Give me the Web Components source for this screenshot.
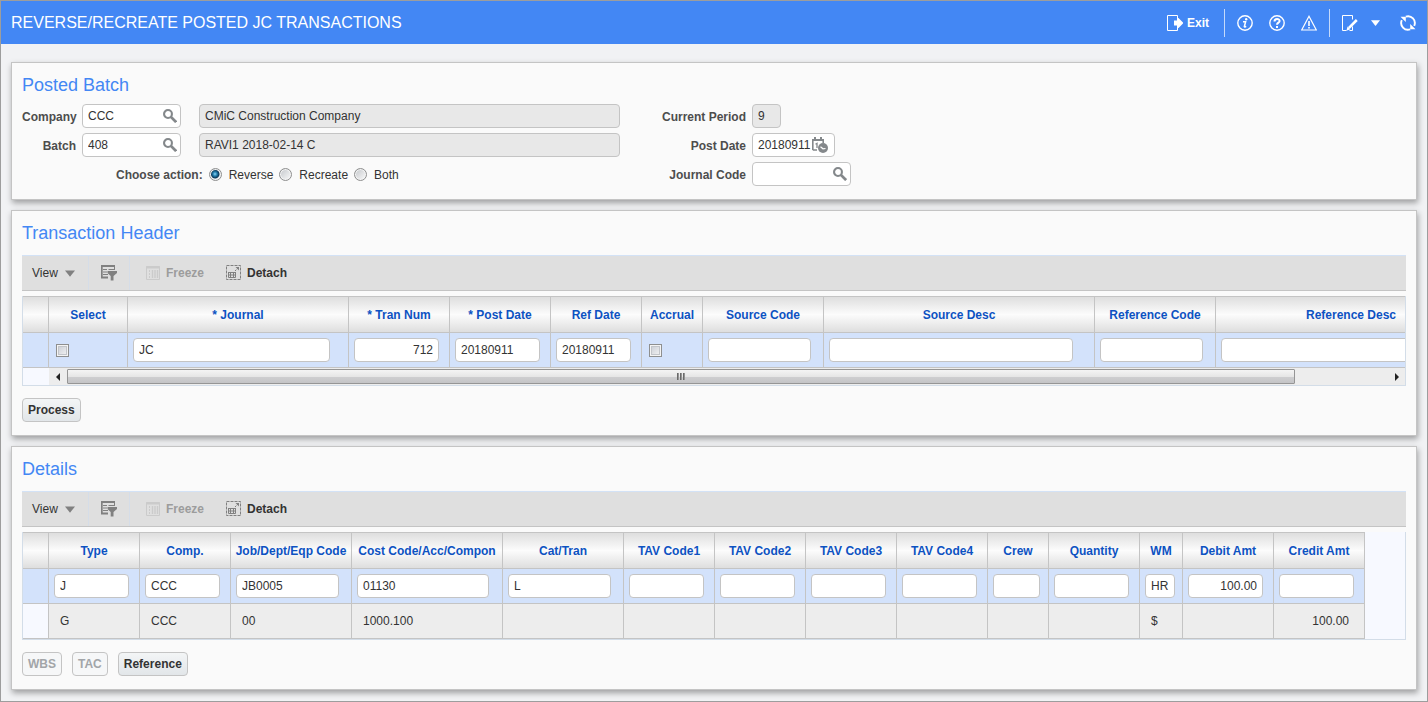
<!DOCTYPE html>
<html lang="en">
<head>
<meta charset="utf-8">
<title>Reverse/Recreate Posted JC Transactions</title>
<style>
    body {
        margin: 0;
        font: 12px/16px "Liberation Sans", Arial, sans-serif;
        color: #333;
    }

    .row {
        display: flex;
        gap: 18px;
    }

    .form {
        display: flex;
        gap: 42px;
    }

    .group {
        display: flex;
        flex-direction: column;
        gap: 5px;
    }

    .group.left {
        --label-width: 54px;
    }

    .group.right {
        --label-width: 84px;
    }

    .actions {
        display: flex;
        gap: 10px;
        margin-top: 12px;
    }
</style>
</head>
<body>
<jc-page>
    <jc-header slot="header" title="REVERSE/RECREATE POSTED JC TRANSACTIONS"></jc-header>

    <jc-panel heading="Posted Batch" dense>
        <div class="form">
            <div class="group left">
                <div class="row">
                    <jc-field label="Company" value="CCC" size="99" icon="search"></jc-field>
                    <jc-field hint="Company name" value="CMiC Construction Company" size="421" readonly></jc-field>
                </div>
                <div class="row">
                    <jc-field label="Batch" value="408" size="99" icon="search"></jc-field>
                    <jc-field hint="Batch name" value="RAVI1 2018-02-14 C" size="421" readonly></jc-field>
                </div>
                <jc-choice label="Choose action:" options="Reverse,Recreate,Both" selected="Reverse"></jc-choice>
            </div>
            <div class="group right">
                <jc-field label="Current Period" value="9" size="29" readonly></jc-field>
                <jc-field label="Post Date" value="20180911" size="83" icon="calendar"></jc-field>
                <jc-field label="Journal Code" value="" size="99" icon="search"></jc-field>
            </div>
        </div>
    </jc-panel>

    <jc-panel heading="Transaction Header">
        <jc-toolbar></jc-toolbar>
        <jc-grid id="header-grid" scroll></jc-grid>
        <div class="actions">
            <jc-button>Process</jc-button>
        </div>
    </jc-panel>

    <jc-panel heading="Details">
        <jc-toolbar></jc-toolbar>
        <jc-grid id="detail-grid"></jc-grid>
        <div class="actions">
            <jc-button disabled>WBS</jc-button>
            <jc-button disabled>TAC</jc-button>
            <jc-button>Reference</jc-button>
        </div>
    </jc-panel>
</jc-page>

<script>
const ICONS = {
    exit: `<path d="M10.500 4V.5H.5v15h10V12" fill="none" stroke="currentColor"/><path d="M7 5.500h3V3h1.500L16 7.500v1L11.500 13H10v-2.500H7z" fill="currentColor"/>`,
    info: `<circle cx="8" cy="8" r="7.200" fill="none" stroke="currentColor" stroke-width="1.400"/><circle cx="9.200" cy="4.200" r="1.200" fill="currentColor"/><path d="M6 6.800h2.600L7.300 11.700q.3.600 1.900-.4" fill="none" stroke="currentColor" stroke-width="1.500"/>`,
    help: `<circle cx="8" cy="8" r="7.200" fill="none" stroke="currentColor" stroke-width="1.400"/><path d="M5.500 6.400C5.500 3.200 10.600 3.300 10.600 6c0 1.800-2.600 1.600-2.600 3.800" fill="none" stroke="currentColor" stroke-width="2"/><path d="M7 11h2v2H7z" fill="currentColor"/>`,
    warning: `<path d="M8 1.300L15.300 15H.7z" fill="none" stroke="currentColor" stroke-width="1.200"/><path d="M7.200 6h1.600v5H7.200zM7.200 12h1.600v1.600H7.200z" fill="currentColor"/>`,
    edit: `<path d="M10.500 4.500v-4H.5v15h4M10.500 11.500v4H7.500" fill="none" stroke="currentColor"/><path d="M14.800 5L7 12.800" fill="none" stroke="currentColor" stroke-width="2.600"/><path d="M5.600 11.400l2.800 2.800-4 1.500z" fill="currentColor"/>`,
    refresh: `<path d="M5.800 1.600A6.800 6.800 0 0 1 14.200 10.800M10.200 14.400A6.800 6.800 0 0 1 1.800 5.200" fill="none" stroke="currentColor" stroke-width="1.900"/><path d="M.5 1.800H5.800V7zM15.500 14.200H10.200V9z" fill="currentColor"/>`,
    caret: `<path d="M0 4h16L8 14z" fill="currentColor"/>`,
    search: `<circle cx="5.700" cy="5.700" r="4.500" fill="none" stroke="currentColor" stroke-width="2.400"/><path d="M9 9l6 6" stroke="currentColor" stroke-width="3.200"/>`,
    calendar: `<path d="M.8 13V2.800h10.400V6M.8 13H5" fill="none" stroke="currentColor" stroke-width="1.600"/><path d="M2 0h2v4H2zM8 0h2v4H8zM0 2h12v2H0z" fill="currentColor"/><path d="M3.500 7.200L5 6.300V11" fill="none" stroke="currentColor" stroke-width="1.300"/><circle cx="11" cy="11" r="5" fill="currentColor"/><path d="M8.500 9.800l2.500 2 2.500-.3" fill="none" stroke="#fff" stroke-width="1.200"/>`,
    filter: `<path d="M0 1h14M.7 1v12M0 12.500h7" fill="none" stroke="currentColor" stroke-width="2"/><path d="M2 4.500h4M7.500 4.500H14M2 7h4M2 9.500h5M13.500 1v4" stroke="currentColor"/><path d="M6.500 6H16v2l-3.500 3v4.500h-2.800V11L6.500 8z" fill="currentColor"/>`,
    freeze: `<path d="M1.500 1.500h13v13h-13z" fill="none" stroke="currentColor"/><path d="M1 2.500h14" stroke="currentColor" stroke-width="2"/><path d="M4.500 5v8" stroke="currentColor" stroke-dasharray="2 1"/><path d="M7.500 5v8M10 5v8M12.500 5v8" stroke="currentColor" stroke-width="1.400"/>`,
    detach: `<path d="M.5.5h14v14H.5z" fill="none" stroke="currentColor" stroke-dasharray="3 1"/><path d="M2.500 7.500h7v5h-7zM2.500 10h7M4.500 8v4.500M7.500 8v4.500M2 7.500h8" fill="none" stroke="currentColor"/><path d="M9 6l3.500-3.500" stroke="currentColor" stroke-dasharray="2 1"/><path d="M9.500 2H13v3.500z" fill="currentColor"/>`
};

class JcIcon extends HTMLElement {
    constructor() {
        super();
        this.attachShadow({mode: 'open'});
    }

    connectedCallback() {
        this.shadowRoot.innerHTML = `
            <style>
                :host {
                    display: block;
                    flex: none;
                    width: 16px;
                    height: 16px;
                }

                svg {
                    display: block;
                    width: 100%;
                    height: 100%;
                }
            </style>
            <svg viewBox="0 0 16 16" aria-hidden="true">${ICONS[this.getAttribute('name')]}</svg>
        `;
    }
}

class JcPage extends HTMLElement {
    constructor() {
        super();
        this.attachShadow({mode: 'open'});
        this.shadowRoot.innerHTML = `
            <style>
                :host {
                    display: block;
                    box-sizing: border-box;
                    min-height: 100vh;
                    border: 1px solid #9d9d9d;
                    background: #f1f2f4;
                }

                main {
                    display: flex;
                    flex-direction: column;
                    gap: 10px;
                    padding: 18px 10px 10px;
                }
            </style>
            <slot name="header"></slot>
            <main><slot></slot></main>
        `;
    }
}

class JcHeader extends HTMLElement {
    constructor() {
        super();
        this.attachShadow({mode: 'open'});
    }

    connectedCallback() {
        this.shadowRoot.innerHTML = `
            <style>
                :host {
                    display: block;
                }

                header {
                    display: flex;
                    align-items: center;
                    justify-content: space-between;
                    height: 43px;
                    padding: 0 11px 0 10px;
                    background: #4387f4;
                    color: #fff;
                }

                h1 {
                    margin: 0;
                    font-size: 16px;
                    font-weight: normal;
                    line-height: 20px;
                }

                nav, .icons {
                    display: flex;
                    align-items: center;
                }

                .icons {
                    gap: 16px;
                    padding: 0 12px;
                    border-left: 1px solid #c5dafb;
                    height: 28px;
                }

                .icons.last {
                    gap: 13px;
                    padding-right: 0;
                }

                button {
                    display: flex;
                    align-items: center;
                    gap: 4px;
                    padding: 0;
                    border: 0;
                    background: none;
                    color: inherit;
                    font: inherit;
                }

                .exit {
                    margin-right: 15px;
                    font-weight: bold;
                }

                .refresh {
                    margin-left: 7px;
                }

                .small {
                    width: 9px;
                    height: 9px;
                }
            </style>
            <header>
                <h1>${this.getAttribute('title')}</h1>
                <nav>
                    <button class="exit"><jc-icon name="exit"></jc-icon>Exit</button>
                    <div class="icons">
                        <button aria-label="Information"><jc-icon name="info"></jc-icon></button>
                        <button aria-label="Help"><jc-icon name="help"></jc-icon></button>
                        <button aria-label="Warnings"><jc-icon name="warning"></jc-icon></button>
                    </div>
                    <div class="icons last">
                        <button aria-label="Edit"><jc-icon name="edit"></jc-icon></button>
                        <button aria-label="More"><jc-icon class="small" name="caret"></jc-icon></button>
                        <button class="refresh" aria-label="Refresh"><jc-icon name="refresh"></jc-icon></button>
                    </div>
                </nav>
            </header>
        `;
    }
}

class JcPanel extends HTMLElement {
    constructor() {
        super();
        this.attachShadow({mode: 'open'});
    }

    connectedCallback() {
        this.shadowRoot.innerHTML = `
            <style>
                :host {
                    display: block;
                    padding: 10px 10px 13px;
                    border: 1px solid #c4c4c4;
                    background: #fafafa;
                    box-shadow: 1px 3px 6px rgba(0, 0, 0, .35);
                }

                h2 {
                    margin: 0 0 10px;
                    font-size: 18px;
                    font-weight: normal;
                    line-height: 24px;
                    color: #4387f4;
                }

                :host([dense]) h2 {
                    margin-bottom: 7px;
                }
            </style>
            <h2>${this.getAttribute('heading')}</h2>
            <slot></slot>
        `;
    }
}

class JcField extends HTMLElement {
    constructor() {
        super();
        this.attachShadow({mode: 'open'});
    }

    connectedCallback() {
        const label = this.getAttribute('label');
        const icon = this.getAttribute('icon');
        const readonly = this.hasAttribute('readonly');
        this.shadowRoot.innerHTML = `
            <style>
                :host {
                    display: flex;
                    align-items: center;
                    gap: 6px;
                }

                label {
                    width: var(--label-width);
                    padding-top: 1px;
                    font-weight: bold;
                    text-align: right;
                    color: #4d4d4d;
                }

                .box {
                    display: flex;
                    align-items: center;
                    box-sizing: border-box;
                    width: ${this.getAttribute('size')}px;
                    height: 24px;
                    padding: 0 3px 0 5px;
                    border: 1px solid #c4c4c4;
                    border-radius: 4px;
                    background: #fff;
                }

                :host([readonly]) .box {
                    background: #e8e8e8;
                }

                input {
                    flex: 1;
                    min-width: 0;
                    padding: 0;
                    border: 0;
                    outline: 0;
                    background: none;
                    color: #333;
                    font: inherit;
                }

                button {
                    padding: 0;
                    border: 0;
                    background: none;
                    color: #84888b;
                }

                jc-icon {
                    width: 14px;
                    height: 14px;
                }

                jc-icon[name=calendar] {
                    width: 16px;
                    height: 16px;
                    margin-right: 3px;
                }
            </style>
            ${label ? `<label for="input">${label}</label>` : ''}
            <div class="box">
                <input id="input" value="${this.getAttribute('value')}" ${label ? '' : `aria-label="${this.getAttribute('hint')}"`} ${readonly ? 'readonly' : ''}>
                ${icon ? `<button aria-label="${icon}"><jc-icon name="${icon}"></jc-icon></button>` : ''}
            </div>
        `;
    }
}

class JcChoice extends HTMLElement {
    constructor() {
        super();
        this.attachShadow({mode: 'open'});
    }

    connectedCallback() {
        const selected = this.getAttribute('selected');
        const options = this.getAttribute('options').split(',');
        this.shadowRoot.innerHTML = `
            <style>
                :host {
                    display: block;
                    padding-left: 94px;
                }

                div {
                    display: flex;
                    align-items: center;
                    gap: 6px;
                    height: 24px;
                    padding-top: 1px;
                    box-sizing: border-box;
                }

                b {
                    color: #4d4d4d;
                }

                label {
                    display: flex;
                    align-items: center;
                    gap: 7px;
                }

                input {
                    appearance: none;
                    box-sizing: border-box;
                    width: 13px;
                    height: 13px;
                    margin: 0;
                    border: 1px solid #8e8f8f;
                    border-radius: 50%;
                    background: linear-gradient(135deg, #c3c6ca, #fbfbfb);
                    box-shadow: inset 0 0 0 1px #f4f4f4;
                }

                input:checked {
                    background: radial-gradient(circle at 5px 5px, #8fd6f5 0, #2280b0 2px, #0b3554 4px, #e6ebef 5px);
                }
            </style>
            <div role="radiogroup" aria-labelledby="caption">
                <b id="caption">${this.getAttribute('label')}</b>
                ${options.map(option => `
                    <label><input type="radio" name="action" ${option === selected ? 'checked' : ''}>${option}</label>
                `).join('')}
            </div>
        `;
    }
}

class JcToolbar extends HTMLElement {
    constructor() {
        super();
        this.attachShadow({mode: 'open'});
        this.shadowRoot.innerHTML = `
            <style>
                :host {
                    display: flex;
                    align-items: center;
                    box-sizing: border-box;
                    height: 36px;
                    padding-left: 10px;
                    border-top: 1px solid #d3e2f6;
                    border-bottom: 1px solid #c4c4c4;
                    background: #dfdfdf;
                }

                button {
                    display: flex;
                    align-items: center;
                    gap: 5px;
                    padding: 0;
                    border: 0;
                    background: none;
                    color: #333;
                    font: inherit;
                    font-weight: bold;
                }

                button.view {
                    gap: 7px;
                    width: 56px;
                    font-weight: normal;
                }

                button:disabled {
                    color: #9c9c9c;
                }

                button:disabled jc-icon {
                    color: #cbcbcb;
                }

                jc-icon {
                    color: #808080;
                }

                .view jc-icon {
                    width: 10px;
                    height: 10px;
                }

                .filter {
                    padding: 9px 12px;
                    border: solid #d5dde8;
                    border-width: 0 1px;
                }

                .freeze {
                    margin: 0 22px 0 15px;
                }
            </style>
            <button class="view">View<jc-icon name="caret"></jc-icon></button>
            <button class="filter" aria-label="Query by example"><jc-icon name="filter"></jc-icon></button>
            <button class="freeze" disabled><jc-icon name="freeze"></jc-icon>Freeze</button>
            <button><jc-icon name="detach"></jc-icon>Detach</button>
        `;
    }
}

class JcButton extends HTMLElement {
    constructor() {
        super();
        this.attachShadow({mode: 'open'});
        this.shadowRoot.innerHTML = `
            <style>
                :host {
                    display: block;
                }

                button {
                    height: 24px;
                    padding: 0 5px;
                    border: 1px solid #c4c4c4;
                    border-radius: 4px;
                    background: linear-gradient(#f3f5f6, #e2e6e9);
                    color: #333;
                    font: inherit;
                    font-weight: bold;
                }

                button:disabled {
                    background: #f6f7f8;
                    color: #a2a5a8;
                }
            </style>
            <button ${this.hasAttribute('disabled') ? 'disabled' : ''}><slot></slot></button>
        `;
    }
}

class JcGrid extends HTMLElement {
    constructor() {
        super();
        this.attachShadow({mode: 'open'});
    }

    // columns: [title, column width, input width, align], rows: arrays of values, the first row is being edited
    load(columns, rows) {
        const total = columns.reduce((sum, column) => sum + column[1], 26);
        this.shadowRoot.innerHTML = `
            <style>
                :host {
                    display: block;
                    margin-top: 5px;
                    border: solid #d3dde8;
                    border-width: 0 1px 1px;
                    background: #f7f9ff;
                }

                .view {
                    overflow: hidden;
                }

                table {
                    table-layout: fixed;
                    width: ${total}px;
                    border-spacing: 0;
                }

                th, td {
                    box-sizing: border-box;
                    padding: 0;
                    border: solid #c4c4c4;
                    border-width: 0 1px 1px 0;
                }

                th {
                    height: 37px;
                    border-top-width: 1px;
                    background: linear-gradient(#dedede, #fcfcfc 50%, #dedede);
                    color: #0d52c2;
                }

                td {
                    height: 35px;
                    padding: 0 15px 0 11px;
                    background: #ededed;
                }

                td.mark {
                    background: #f7f9ff;
                }

                .edit td {
                    padding: 0 0 0 5px;
                    background: #d3e2fb;
                }

                .right {
                    text-align: right;
                }

                .edit .right {
                    text-align: left;
                }

                input {
                    display: block;
                    box-sizing: border-box;
                    height: 24px;
                    margin: 0;
                    padding: 0 5px;
                    border: 1px solid #c4c4c4;
                    border-radius: 4px;
                    background: #fff;
                    color: #333;
                    font: inherit;
                }

                .right input {
                    text-align: right;
                }

                input[type=checkbox] {
                    appearance: none;
                    width: 13px;
                    height: 13px;
                    margin-left: 2px;
                    border: 1px solid #8e8f8f;
                    border-radius: 0;
                    background: linear-gradient(135deg, #c6cad2, #f6f6f6);
                    box-shadow: inset 0 0 0 1px #f4f4f4, inset 0 0 0 2px #c2c5ca;
                }

                .scroll {
                    display: flex;
                    height: 17px;
                    padding-left: 26px;
                }

                .scroll button {
                    display: flex;
                    align-items: center;
                    justify-content: center;
                    width: 17px;
                    padding: 0;
                    border: 0;
                    background: #ededed;
                }

                .scroll svg {
                    width: 4px;
                    height: 8px;
                }

                .track {
                    flex: 1;
                    padding: 1px;
                    background: #ededed;
                }

                .thumb {
                    display: flex;
                    align-items: center;
                    justify-content: center;
                    gap: 1px;
                    box-sizing: border-box;
                    width: 93%;
                    height: 15px;
                    border: 1px solid #959595;
                    border-radius: 1px;
                    background: linear-gradient(#f4f4f4, #e6e6e6 50%, #cfcfd1 50%, #c4c4c6);
                }

                .thumb i {
                    width: 2px;
                    height: 7px;
                    background: linear-gradient(90deg, #555, #aaa);
                }
            </style>
            <div class="view">
                <table>
                    <colgroup><col style="width: 26px">${columns.map(column => `<col style="width: ${column[1]}px">`).join('')}</colgroup>
                    <thead><tr><th></th>${columns.map(column => `<th scope="col">${column[0]}</th>`).join('')}</tr></thead>
                    <tbody>${rows.map((row, index) => `
                        <tr class="${index ? '' : 'edit'}"><td class="mark"></td>${row.map((value, i) => this.cell(value, columns[i], !index)).join('')}</tr>
                    `).join('')}</tbody>
                </table>
            </div>
            ${this.hasAttribute('scroll') ? `
                <div class="scroll">
                    <button aria-label="Scroll left"><svg viewBox="0 0 4 8"><path d="M4 0v8L0 4z" fill="#222"/></svg></button>
                    <div class="track"><div class="thumb"><i></i><i></i><i></i></div></div>
                    <button aria-label="Scroll right"><svg viewBox="0 0 4 8"><path d="M0 0v8l4-4z" fill="#222"/></svg></button>
                </div>
            ` : ''}
        `;
    }

    cell(value, [title, , size, align], edit) {
        if (!edit) {
            return `<td class="${align || ''}">${value}</td>`;
        }
        if (align === 'check') {
            return `<td><input type="checkbox" aria-label="${title}"></td>`;
        }
        return `<td class="${align || ''}"><input style="width: ${size}px" aria-label="${title}" value="${value}"></td>`;
    }
}

customElements.define('jc-icon', JcIcon);
customElements.define('jc-page', JcPage);
customElements.define('jc-header', JcHeader);
customElements.define('jc-panel', JcPanel);
customElements.define('jc-field', JcField);
customElements.define('jc-choice', JcChoice);
customElements.define('jc-toolbar', JcToolbar);
customElements.define('jc-button', JcButton);
customElements.define('jc-grid', JcGrid);

document.querySelector('#header-grid').load([
    ['Select', 79, 0, 'check'],
    ['* Journal', 221, 197],
    ['* Tran Num', 101, 85, 'right'],
    ['* Post Date', 101, 85],
    ['Ref Date', 91, 75],
    ['Accrual', 61, 0, 'check'],
    ['Source Code', 121, 103],
    ['Source Desc', 271, 244],
    ['Reference Code', 121, 103],
    ['Reference Desc', 271, 244]
], [
    ['', 'JC', '712', '20180911', '20180911', '', '', '', '', '']
]);

document.querySelector('#detail-grid').load([
    ['Type', 91, 75],
    ['Comp.', 91, 75],
    ['Job/Dept/Eqp Code', 121, 103],
    ['Cost Code/Acc/Compon', 151, 132],
    ['Cat/Tran', 121, 103],
    ['TAV Code1', 91, 75],
    ['TAV Code2', 91, 75],
    ['TAV Code3', 91, 75],
    ['TAV Code4', 91, 75],
    ['Crew', 61, 47],
    ['Quantity', 91, 75],
    ['WM', 43, 30],
    ['Debit Amt', 91, 75, 'right'],
    ['Credit Amt', 91, 75, 'right']
], [
    ['J', 'CCC', 'JB0005', '01130', 'L', '', '', '', '', '', '', 'HR', '100.00', ''],
    ['G', 'CCC', '00', '1000.100', '', '', '', '', '', '', '', '$', '', '100.00']
]);
</script>
</body>
</html>
